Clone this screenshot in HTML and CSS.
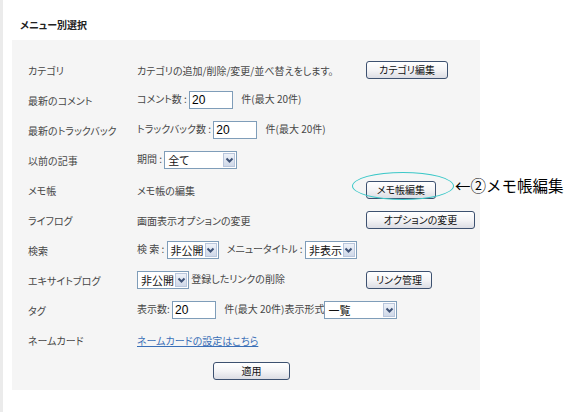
FILE: index.html
```html
<!DOCTYPE html>
<html lang="ja">
<head>
    <meta charset="UTF-8">
    <meta name="viewport" content="width=device-width, initial-scale=1.0">
    <title>メニュー別選択</title>
    <link rel="stylesheet" href="styles.css">
</head>
<body>
    <div class="page">
        <h2 class="title">メニュー別選択</h2>
        <div class="panel">
            <table class="menu">
                <tr>
                    <th>カテゴリ</th>
                    <td class="desc">カテゴリの追加/削除/変更/並べ替えをします。</td>
                    <td><button class="btn btn-category">カテゴリ編集</button></td>
                </tr>
                <tr>
                    <th>最新のコメント</th>
                    <td colspan="2">コメント数 : <input class="field" type="text" value="20"> <span class="unit">件(最大 20件)</span></td>
                </tr>
                <tr>
                    <th>最新のトラックバック</th>
                    <td colspan="2">トラックバック数 : <input class="field" type="text" value="20"> <span class="unit">件(最大 20件)</span></td>
                </tr>
                <tr>
                    <th>以前の記事</th>
                    <td colspan="2">期間 : <span class="sel sel-wide"><span class="sel-text">全て</span><span class="arrow"><svg width="9" height="7" viewBox="0 0 9 7"><polyline points="1.5,1.5 4.5,4.5 7.5,1.5" fill="none" stroke="#3f5378" stroke-width="2"/></svg></span></span></td>
                </tr>
                <tr>
                    <th>メモ帳</th>
                    <td class="desc">メモ帳の編集</td>
                    <td><button class="btn btn-memo">メモ帳編集</button></td>
                </tr>
                <tr>
                    <th>ライフログ</th>
                    <td class="desc">画面表示オプションの変更</td>
                    <td><button class="btn btn-option">オプションの変更</button></td>
                </tr>
                <tr>
                    <th>検索</th>
                    <td colspan="2">検 索 : <span class="sel"><span class="sel-text">非公開</span><span class="arrow"><svg width="9" height="7" viewBox="0 0 9 7"><polyline points="1.5,1.5 4.5,4.5 7.5,1.5" fill="none" stroke="#3f5378" stroke-width="2"/></svg></span></span>
                        <span class="gap">メニュータイトル : </span><span class="sel"><span class="sel-text">非表示</span><span class="arrow"><svg width="9" height="7" viewBox="0 0 9 7"><polyline points="1.5,1.5 4.5,4.5 7.5,1.5" fill="none" stroke="#3f5378" stroke-width="2"/></svg></span></span></td>
                </tr>
                <tr>
                    <th>エキサイトブログ</th>
                    <td class="desc"><span class="sel"><span class="sel-text">非公開</span><span class="arrow"><svg width="9" height="7" viewBox="0 0 9 7"><polyline points="1.5,1.5 4.5,4.5 7.5,1.5" fill="none" stroke="#3f5378" stroke-width="2"/></svg></span></span> 登録したリンクの削除</td>
                    <td><button class="btn btn-link">リンク管理</button></td>
                </tr>
                <tr>
                    <th>タグ</th>
                    <td colspan="2">表示数: <input class="field" type="text" value="20"> <span class="unit">件(最大 20件)</span>表示形式<span class="sel sel-wide"><span class="sel-text">一覧</span><span class="arrow"><svg width="9" height="7" viewBox="0 0 9 7"><polyline points="1.5,1.5 4.5,4.5 7.5,1.5" fill="none" stroke="#3f5378" stroke-width="2"/></svg></span></span></td>
                </tr>
                <tr>
                    <th>ネームカード</th>
                    <td colspan="2"><a class="link" href="#">ネームカードの設定はこちら</a></td>
                </tr>
            </table>
            <div class="submit"><button class="btn btn-apply">適用</button></div>
        </div>

        <!-- annotation drawn over the screenshot -->
        <div class="circle"></div>
        <div class="note">←②メモ帳編集</div>
    </div>
</body>
</html>
```

FILE: styles.css
```css
body {
    margin: 0;
    background-color: #fff;
    font-family: "Noto Sans CJK JP", sans-serif;
    font-size: 10px;
    font-feature-settings: "palt";
    color: #474747;
}

.page {
    position: relative;
    height: 412px;
    box-sizing: border-box;
    border-left: 3px solid #ebebeb;
    padding: 18px 0 0 9px;
}

.title {
    margin: 0 0 8px 8px;
    height: 14px;
    font-size: 10px;
    line-height: 14px;
    font-weight: bold;
    color: #222;
}

.panel {
    width: 468px;
    box-sizing: border-box;
    padding: 15px 0 3px 16px;
    background-color: #f5f5f5;
}

.menu {
    border-collapse: collapse;
    border-spacing: 0;
}

.menu tr {
    height: 30px;
}

.menu th {
    width: 109px;
    padding: 0;
    text-align: left;
    font-weight: normal;
    white-space: nowrap;
}

.menu td {
    padding: 0;
    white-space: nowrap;
}

.menu td.desc {
    width: 229px;
}

.field {
    width: 44px;
    height: 18px;
    box-sizing: border-box;
    border: 1px solid #7f9db9;
    padding: 0 2px;
    font-family: "Liberation Sans", sans-serif;
    font-size: 12px;
    color: #000;
    vertical-align: middle;
}

.unit {
    margin-left: 6px;
}

.gap {
    margin-left: 6px;
}

.sel {
    display: inline-flex;
    align-items: center;
    justify-content: space-between;
    width: 52px;
    height: 18px;
    box-sizing: border-box;
    border: 1px solid #7f9db9;
    background-color: #fff;
    vertical-align: middle;
}

.sel-wide {
    width: 73px;
}

.sel-text {
    padding-left: 3px;
    font-size: 11px;
    color: #111;
}

.arrow {
    display: flex;
    align-items: center;
    justify-content: center;
    width: 12px;
    height: 14px;
    margin-right: 1px;
    border: 1px solid #b9c6dc;
    box-sizing: border-box;
    background: linear-gradient(#eef2f9, #cfd8e8);
}

.btn {
    height: 18px;
    padding: 0;
    border: 1px solid #3d5170;
    border-radius: 3px;
    background: linear-gradient(#ffffff 0%, #f4f4f6 50%, #dcdde4 100%);
    font-family: "Noto Sans CJK JP", sans-serif;
    font-size: 10px;
    font-feature-settings: "palt";
    line-height: 16px;
    color: #111;
}

.btn-category { width: 82px; }
.btn-memo { width: 70px; }
.btn-option { width: 109px; }
.btn-link { width: 66px; }
.btn-apply { width: 77px; }

.link {
    color: #3a6fb7;
}

.submit {
    height: 32px;
    padding-left: 185px;
    display: flex;
    align-items: center;
}

.circle {
    position: absolute;
    left: 349px;
    top: 172px;
    width: 102px;
    height: 28px;
    box-sizing: border-box;
    border: 1.5px solid #3cc8c8;
    border-radius: 50%;
}

.note {
    position: absolute;
    left: 452px;
    top: 175px;
    font-size: 15.5px;
    line-height: 20px;
    font-feature-settings: normal;
    color: #000;
    white-space: nowrap;
}
```
